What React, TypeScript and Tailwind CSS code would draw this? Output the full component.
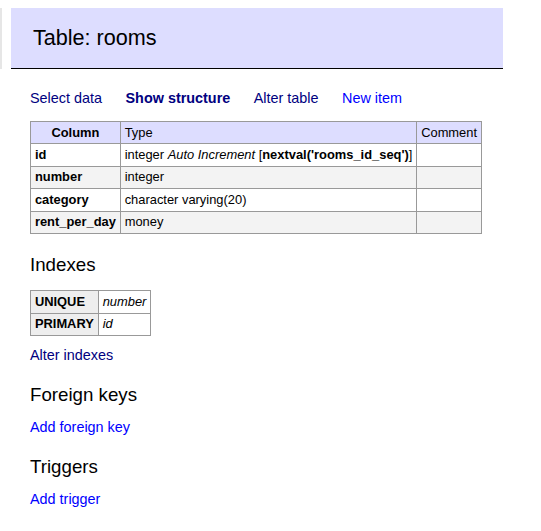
import React from "react";

const font = { fontFamily: '"Liberation Sans", Arial, sans-serif' };

export default function App() {
  const rows = [
    { name: "id", type: (
      <>integer <i>Auto Increment</i> [<b>nextval('rooms_id_seq')</b>]</>
    ) },
    { name: "number", type: <>integer</> },
    { name: "category", type: <>character varying(20)</> },
    { name: "rent_per_day", type: <>money</> },
  ];
  return (
    <div className="w-[541px] h-[531px] bg-white text-black overflow-hidden" style={font}>
      <div className="flex pt-[8px]">
        <div className="w-[2px] h-[61px] bg-[#e6e6e6]" />
        <div className="ml-[9px] w-[492px] h-[61px] bg-[#ddf] border-b border-black pl-[22px] flex items-center">
          <span className="text-[21.6px] leading-[25px] pb-[2px]">Table: rooms</span>
        </div>
      </div>
      <div className="pl-[30px] text-[14.4px] leading-[18px]">
        <p className="mt-[20px] flex gap-[23.5px]">
          <a className="text-[#000080]">Select data</a>
          <a className="text-[#000080] font-bold">Show structure</a>
          <a className="text-[#000080]">Alter table</a>
          <a className="text-[#0000ff]">New item</a>
        </p>
        <table className="mt-[14px] border-collapse text-[12.9px] leading-[16.2px]">
          <thead>
            <tr className="bg-[#ddf]">
              <th className="border border-[#999] px-[6.5px] py-[2.6px] font-bold text-center">Column</th>
              <td className="border border-[#999] px-[3.9px] py-[2.6px]">Type</td>
              <td className="border border-[#999] px-[3.9px] py-[2.6px]">Comment</td>
            </tr>
          </thead>
          <tbody>
            {rows.map((r, i) => (
              <tr key={r.name} className={i % 2 === 1 ? "bg-[#f3f3f3]" : "bg-white"}>
                <th className="border border-[#999] px-[3.9px] py-[2.6px] font-bold text-left">{r.name}</th>
                <td className="border border-[#999] px-[3.9px] py-[2.6px]">{r.type}</td>
                <td className="border border-[#999] px-[3.9px] py-[2.6px]"></td>
              </tr>
            ))}
          </tbody>
        </table>
        <h3 className="mt-[19px] text-[18.72px] leading-[23.4px] font-normal">Indexes</h3>
        <table className="mt-[14px] border-collapse text-[12.9px] leading-[16px]">
          <tbody>
            <tr>
              <th className="border border-[#999] px-[3.9px] py-[2.6px] font-bold text-left bg-[#eee]">UNIQUE</th>
              <td className="border border-[#999] px-[3.9px] py-[2.6px]"><i>number</i></td>
            </tr>
            <tr>
              <th className="border border-[#999] px-[3.9px] py-[2.6px] font-bold text-left bg-[#eee]">PRIMARY</th>
              <td className="border border-[#999] px-[3.9px] py-[2.6px]"><i>id</i></td>
            </tr>
          </tbody>
        </table>
        <p className="mt-[10px]"><a className="text-[#000080]">Alter indexes</a></p>
        <h3 className="mt-[19px] text-[18.72px] leading-[23.4px] font-normal">Foreign keys</h3>
        <p className="mt-[12px]"><a className="text-[#0000ff]">Add foreign key</a></p>
        <h3 className="mt-[19px] text-[18.72px] leading-[23.4px] font-normal">Triggers</h3>
        <p className="mt-[11px]"><a className="text-[#0000ff]">Add trigger</a></p>
      </div>
    </div>
  );
}
